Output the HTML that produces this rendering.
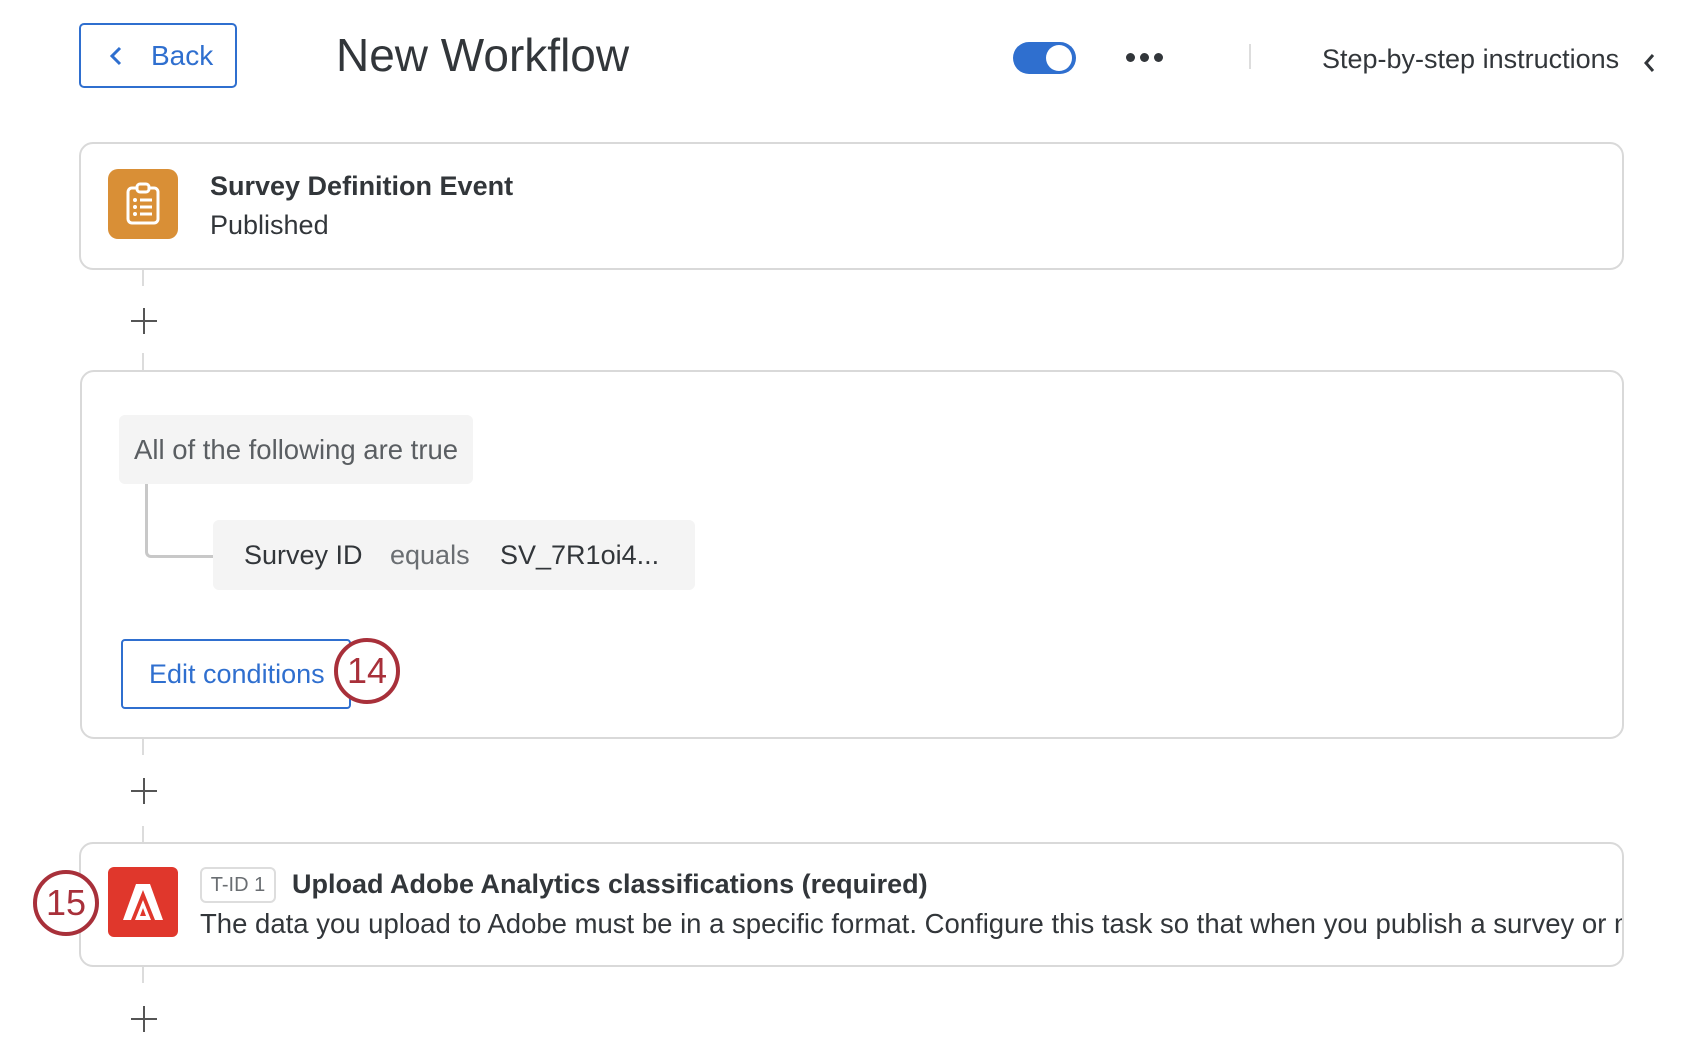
<!DOCTYPE html>
<html><head><meta charset="utf-8"><style>
*{box-sizing:border-box;margin:0;padding:0}
body{width:1700px;height:1052px;background:#fff;font-family:"Liberation Sans",Arial,sans-serif;color:#32363a;position:relative;overflow:hidden}
.a{position:absolute}
.card{position:absolute;border:2px solid #d9d9d9;border-radius:14px;background:#fff;overflow:hidden}
.vl{position:absolute;left:142px;width:2px;background:#dcdcdc}
.plus{position:absolute;left:131px;width:26px;height:26px}
.plus:before{content:"";position:absolute;left:12px;top:0;width:2px;height:26px;background:#555}
.plus:after{content:"";position:absolute;top:12px;left:0;height:2px;width:26px;background:#555}
.circ{position:absolute;width:66px;height:66px;border:4px solid #a8303a;border-radius:50%;color:#a8303a;font-size:36px;text-align:center;line-height:58px;background:#fff}
</style></head><body>
<div class="a" style="left:79px;top:23px;width:158px;height:65px;border:2px solid #2f6fcf;border-radius:5px;color:#2f6fcf;font-size:28px;line-height:61px">
<svg class="a" style="left:28px;top:21px" width="14" height="20" viewBox="0 0 14 20"><path d="M11 2 L3 10 L11 18" fill="none" stroke="#2f6fcf" stroke-width="3"/></svg>
<span class="a" style="left:70px;top:0">Back</span></div>
<div class="a" style="left:336px;top:28px;font-size:46px;line-height:54px;color:#32363a">New Workflow</div>
<div class="a" style="left:1013px;top:42px;width:63px;height:32px;border-radius:16px;background:#2f6fcf"><div class="a" style="left:33px;top:3px;width:26px;height:26px;border-radius:50%;background:#fff"></div></div>
<div class="a" style="left:1126px;top:53px;width:9px;height:9px;border-radius:50%;background:#32363a"></div>
<div class="a" style="left:1140px;top:53px;width:9px;height:9px;border-radius:50%;background:#32363a"></div>
<div class="a" style="left:1154px;top:53px;width:9px;height:9px;border-radius:50%;background:#32363a"></div>
<div class="a" style="left:1249px;top:44px;width:2px;height:25px;background:#ddd"></div>
<div class="a" style="left:1322px;top:42px;font-size:27px;line-height:34px">Step-by-step instructions</div>
<svg class="a" style="left:1642px;top:52px" width="14" height="22" viewBox="0 0 14 22"><path d="M11 3 L4 11 L11 19" fill="none" stroke="#32363a" stroke-width="3"/></svg>

<div class="card" style="left:79px;top:142px;width:1545px;height:128px">
<div class="a" style="left:27px;top:25px;width:70px;height:70px;border-radius:10px;background:#d98f36">
<svg class="a" style="left:17px;top:13px" width="36" height="44" viewBox="0 0 36 44"><rect x="3" y="6" width="30" height="35" rx="4" fill="none" stroke="#fff" stroke-width="3"/><rect x="12" y="2" width="12" height="8" rx="3" fill="#d98f36" stroke="#fff" stroke-width="3"/><g fill="#fff"><circle cx="10" cy="18" r="2"/><circle cx="10" cy="25" r="2"/><circle cx="10" cy="32" r="2"/><rect x="15" y="16.5" width="12" height="3"/><rect x="15" y="23.5" width="12" height="3"/><rect x="15" y="30.5" width="12" height="3"/></g></svg></div>
<div class="a" style="left:129px;top:27px;font-size:27px;font-weight:bold">Survey Definition Event</div>
<div class="a" style="left:129px;top:66px;font-size:27px">Published</div>
</div>
<div class="vl" style="top:270px;height:16px"></div>
<div class="plus" style="top:308px"></div>
<div class="vl" style="top:353px;height:18px"></div>

<div class="card" style="left:80px;top:370px;width:1544px;height:369px">
<div class="a" style="left:37px;top:43px;width:354px;height:69px;background:#f4f4f4;border-radius:6px;color:#5a5e62;font-size:27.5px;line-height:69px;padding-left:15px;white-space:nowrap">All of the following are true</div>
<div class="a" style="left:63px;top:112px;width:68px;height:74px;border-left:3px solid #c8c8c8;border-bottom:3px solid #c8c8c8;border-bottom-left-radius:6px"></div>
<div class="a" style="left:131px;top:148px;width:482px;height:70px;background:#f4f4f4;border-radius:6px;font-size:27px;line-height:70px">
<span class="a" style="left:31px">Survey ID</span><span class="a" style="left:177px;color:#6a6e72">equals</span><span class="a" style="left:287px">SV_7R1oi4...</span></div>
<div class="a" style="left:39px;top:267px;width:230px;height:70px;border:2px solid #2f6fcf;border-radius:4px;color:#2f6fcf;font-size:27px;line-height:66px;padding-left:26px;white-space:nowrap">Edit conditions</div>
</div>
<div class="circ" style="left:334px;top:638px">14</div>
<div class="vl" style="top:739px;height:16px"></div>
<div class="plus" style="top:778px"></div>
<div class="vl" style="top:826px;height:16px"></div>

<div class="card" style="left:79px;top:842px;width:1545px;height:125px">
<div class="a" style="left:27px;top:23px;width:70px;height:70px;border-radius:6px;background:#e0372c">
<svg class="a" style="left:14px;top:14px" width="42" height="42" viewBox="0 0 42 42"><path d="M14 3 H28 L41 39 H33 L21 9 L9 39 H1 Z" fill="#fff"/><path d="M21 19 L29 39 H13 Z" fill="#fff"/><path d="M21 27 L24 35 H18 Z" fill="#e0372c"/></svg></div>
<div class="a" style="left:119px;top:23px;width:76px;height:36px;border:2px solid #ddd;border-radius:6px;color:#6a6e72;font-size:20px;line-height:32px;text-align:center">T-ID 1</div>
<div class="a" style="left:211px;top:25px;font-size:27px;font-weight:bold;white-space:nowrap">Upload Adobe Analytics classifications (required)</div>
<div class="a" style="left:119px;top:64px;font-size:27.5px;white-space:nowrap">The data you upload to Adobe must be in a specific format. Configure this task so that when you publish a survey or make changes</div>
</div>
<div class="circ" style="left:33px;top:870px">15</div>
<div class="vl" style="top:967px;height:16px"></div>
<div class="plus" style="top:1006px"></div>
</body></html>
